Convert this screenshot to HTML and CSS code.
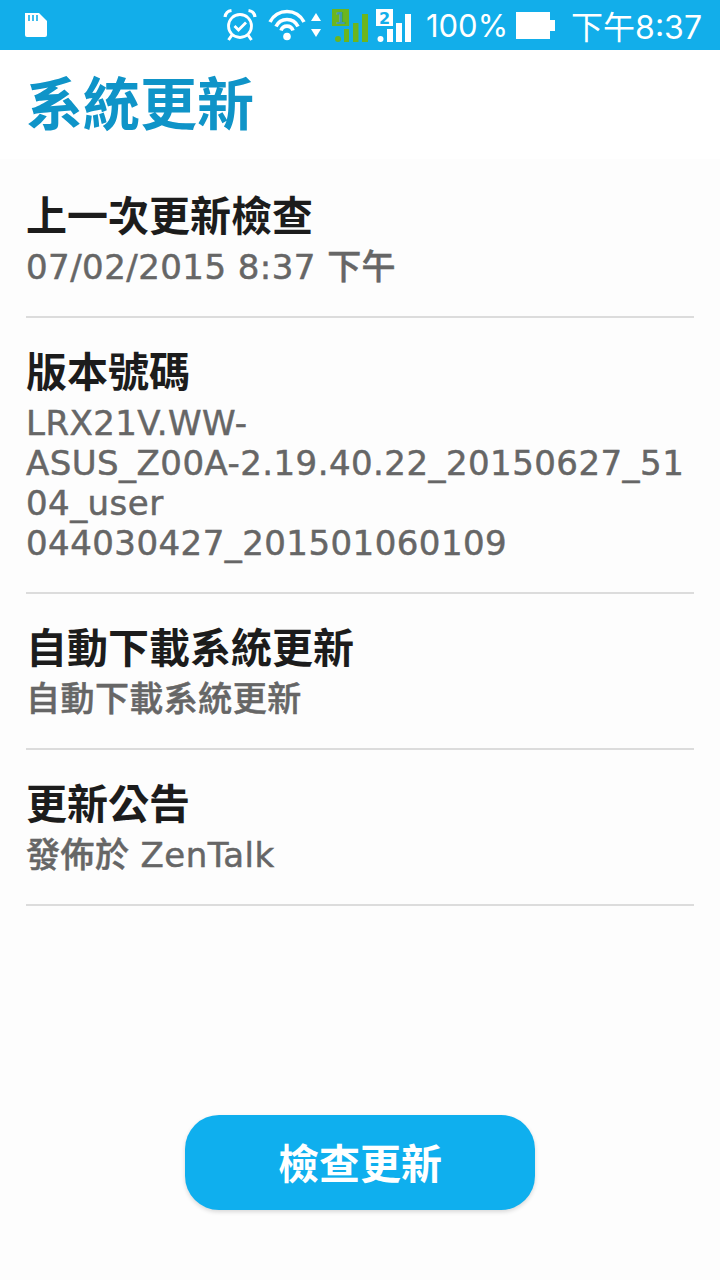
FILE: index.html
```html
<!DOCTYPE html>
<html lang="zh-Hant">
<head>
  <meta charset="UTF-8">
  <meta name="viewport" content="width=device-width, initial-scale=1.0">
  <title>系統更新</title>
  <link rel="stylesheet" href="styles.css">
</head>
<body>
  <div class="statusbar">
    <svg class="ic-sd" width="24" height="26" viewBox="0 0 24 26">
      <path d="M1 1h14l8 8v14a2 2 0 0 1-2 2H3a2 2 0 0 1-2-2z" fill="#fff"/>
      <path d="M5 3v6M9 3v6M13 3v6" stroke="#12aeea" stroke-width="1.6"/>
    </svg>
    <div class="status-right">
      <svg class="ic-alarm" width="34" height="34" viewBox="0 0 34 34" fill="none" stroke="#fff">
        <circle cx="17" cy="18" r="11.500" stroke-width="2.800"/>
        <path d="M11.500 18l4 4 7.500-7.500" stroke-width="2.800"/>
        <path d="M2 9c.5-3.500 3-6 6.500-6.500M32 9c-.5-3.500-3-6-6.500-6.500" stroke-width="3.200"/>
        <path d="M9 27l-3.500 5M25 27l3.500 5" stroke-width="3"/>
      </svg>
      <svg class="ic-wifi" width="38" height="32" viewBox="0 0 38 32" fill="none" stroke="#fff" stroke-width="3.600">
        <path d="M2 13A19 19 0 0 1 36 13M8 17.500A12.100 12.100 0 0 1 30 17.500M13 21.500A6.300 6.300 0 0 1 25 21.500"/>
        <circle cx="19" cy="27.500" r="3.800" fill="#fff" stroke="none"/>
      </svg>
      <svg class="ic-updown" width="10" height="26" viewBox="0 0 10 26">
        <path d="M5 1l5 8H0zM0 17h10l-5 8z" fill="#fff"/>
      </svg>
      <svg class="ic-sim ic-sim-1" width="36" height="35" viewBox="0 0 36 35">
        <path d="M0 1h17v17H0z" fill="#6cb51e"/>
        <text class="sim-num" x="8.500" y="15.500" fill="#3d9bb0">1</text>
        <circle cx="6" cy="31" r="3" fill="#6cb51e"/>
        <path d="M12 34V21h5v13zM21 34V15h5.500v19zM30 34V6h6v28z" fill="#6cb51e"/>
      </svg>
      <svg class="ic-sim ic-sim-2" width="36" height="35" viewBox="0 0 36 35">
        <path d="M0 1h17v17H0z" fill="#fff"/>
        <text class="sim-num" x="8.500" y="15.500" fill="#12aeea">2</text>
        <circle cx="4.500" cy="31" r="3" fill="#fff"/>
        <path d="M11 34V21h6v13zM20 34V15h6v19zM29 34V6h6v28z" fill="#fff"/>
      </svg>
      <span class="battery-pct">100%</span>
      <svg class="ic-battery" width="39" height="27" viewBox="0 0 39 27">
        <path d="M0 0h34v8h5v11h-5v8H0z" fill="#fff"/>
      </svg>
      <span class="clock">下午8:37</span>
    </div>
  </div>

  <div class="page">
    <h1 class="page-title">系統更新</h1>

    <ul class="list">
      <li class="item">
        <div class="item-title">上一次更新檢查</div>
        <div class="item-sub">07/02/2015 8:37 下午</div>
      </li>
      <li class="item">
        <div class="item-title">版本號碼</div>
        <div class="item-sub">LRX21V.WW-<br>ASUS_Z00A-2.19.40.22_20150627_51<br>04_user<br>044030427_201501060109</div>
      </li>
      <li class="item">
        <div class="item-title">自動下載系統更新</div>
        <div class="item-sub">自動下載系統更新</div>
      </li>
      <li class="item">
        <div class="item-title">更新公告</div>
        <div class="item-sub">發佈於 ZenTalk</div>
      </li>
    </ul>

    <div class="actions">
      <button class="check-btn">檢查更新</button>
    </div>
  </div>
</body>
</html>
```

FILE: styles.css
```css
* {
  box-sizing: border-box;
}

body {
  margin: 0;
  height: 1280px;
  overflow: hidden;
  background: #fdfdfd;
  font-family: "Noto Sans CJK TC", sans-serif;
  display: flex;
  flex-direction: column;
}

.statusbar {
  height: 50px;
  flex: none;
  background: #12aeea;
  color: white;
  display: flex;
  justify-content: space-between;
  align-items: center;
  padding: 0 18px 0 24px;
  font-family: "Inter", "Noto Sans CJK TC", sans-serif;
}

.status-right {
  display: flex;
  align-items: center;
}

.ic-alarm {
  margin-right: 11px;
}

.ic-updown {
  margin: 0 11px 0 5px;
}

.ic-sim-1 {
  margin-right: 8px;
}

.ic-sim-2 {
  margin-right: 14px;
}

.sim-num {
  font-family: "DejaVu Sans", sans-serif;
  font-size: 16px;
  font-weight: 700;
  text-anchor: middle;
}

.battery-pct {
  font-size: 31px;
  margin-right: 8px;
}

.ic-battery {
  margin-right: 16px;
}

.clock {
  font-size: 32px;
}

.page {
  flex: 1;
  display: flex;
  flex-direction: column;
  min-height: 0;
}

.page-title {
  margin: 0;
  height: 109px;
  flex: none;
  padding: 17px 26px 0;
  background: #fff;
  color: #0f94c8;
  font-size: 57px;
  line-height: 66px;
  font-weight: 700;
}

.list {
  list-style: none;
  margin: 0 26px;
  padding: 3px 0 0;
}

.item {
  padding: 25px 0 29px;
  border-bottom: 2px solid #dcdcdc;
}

.item-title {
  font-size: 41px;
  line-height: 52px;
  font-weight: 700;
  color: #1c1c1c;
  margin-bottom: 8px;
}

.item-sub {
  font-family: "DejaVu Sans", "Noto Sans CJK TC", sans-serif;
  font-size: 34px;
  line-height: 40px;
  letter-spacing: 0.45px;
  font-weight: 500;
  color: #666;
  -webkit-text-stroke: 0.5px #666;
  white-space: nowrap;
}

.actions {
  margin-top: auto;
  padding-bottom: 70px;
  display: flex;
  justify-content: center;
}

.check-btn {
  width: 350px;
  height: 95px;
  padding: 0 0 4px;
  border: none;
  border-radius: 34px;
  background: #0fafee;
  color: white;
  font-family: inherit;
  font-size: 41px;
  font-weight: 700;
  box-shadow: 0 2px 4px rgba(0, 0, 0, 0.15);
}
```
